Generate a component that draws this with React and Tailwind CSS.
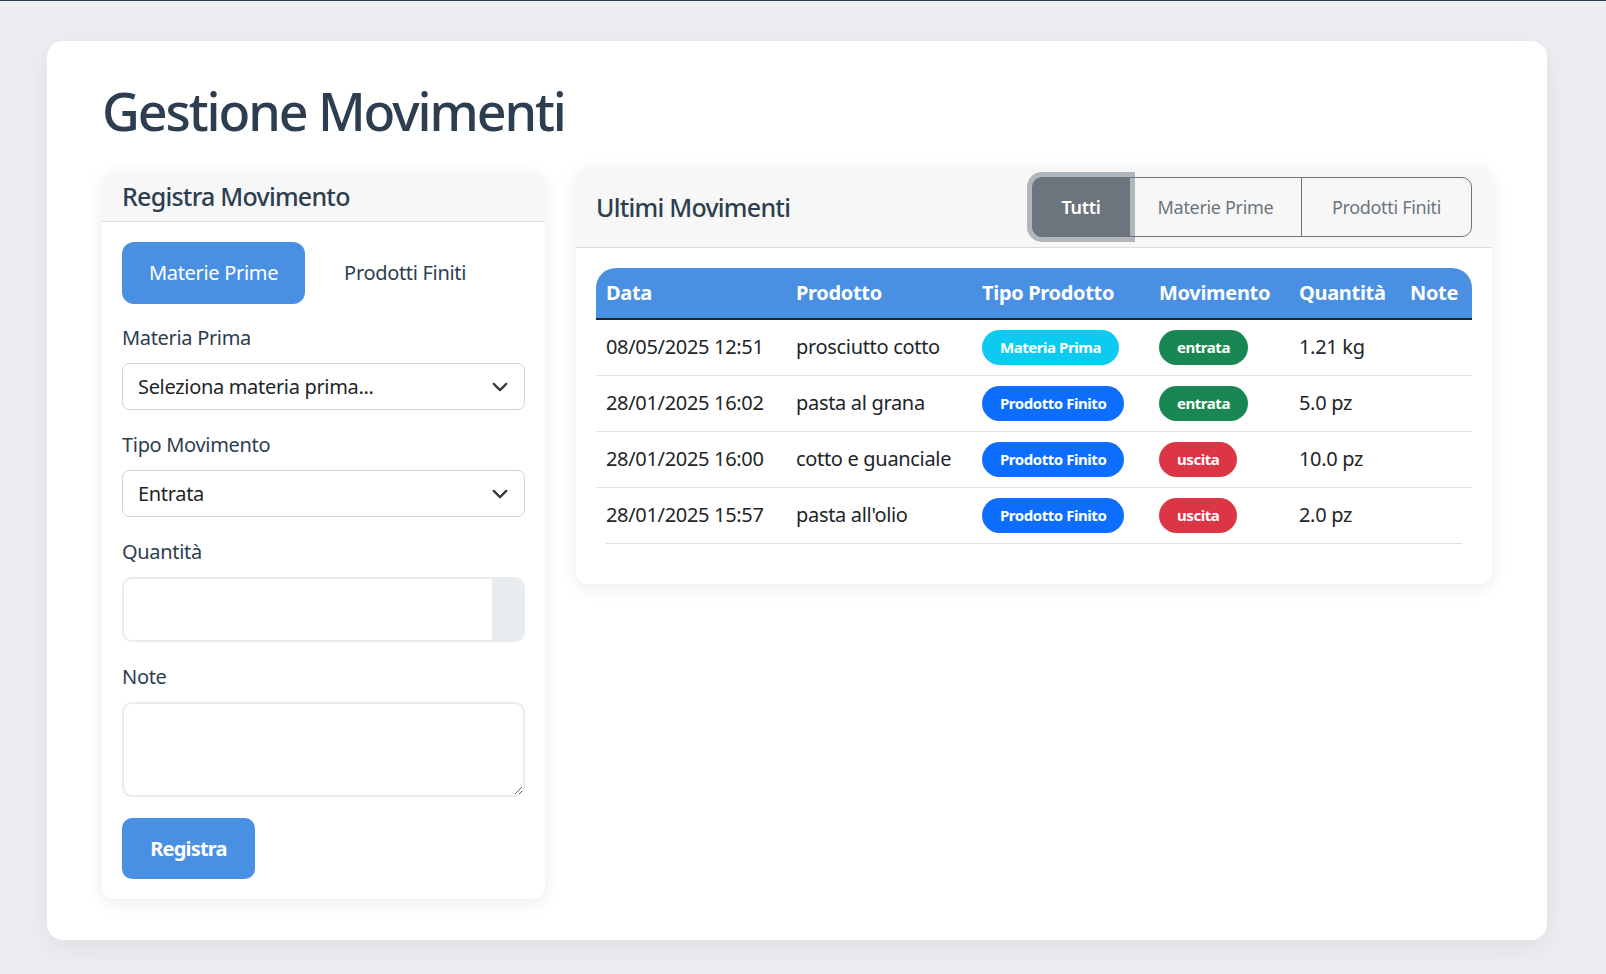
import { useState } from "react";

const movimenti = [
  { data: "08/05/2025 12:51", prodotto: "prosciutto cotto", tipo: "materia", movimento: "entrata", quantita: "1.21 kg" },
  { data: "28/01/2025 16:02", prodotto: "pasta al grana", tipo: "prodotto", movimento: "entrata", quantita: "5.0 pz" },
  { data: "28/01/2025 16:00", prodotto: "cotto e guanciale", tipo: "prodotto", movimento: "uscita", quantita: "10.0 pz" },
  { data: "28/01/2025 15:57", prodotto: "pasta all'olio", tipo: "prodotto", movimento: "uscita", quantita: "2.0 pz" },
];

function Chevron() {
  return (
    <svg width="20" height="15" viewBox="0 0 16 12" className="pointer-events-none absolute right-[15px] top-1/2 -translate-y-1/2">
      <path d="M3 3.5l5 5 5-5" fill="none" stroke="#343a40" strokeWidth="1.8" strokeLinecap="round" strokeLinejoin="round" />
    </svg>
  );
}

function Badge({ className, children }) {
  return (
    <span className={`inline-block rounded-full px-[18px] py-[10px] text-[15px] font-bold leading-[15px] tracking-[-0.03em] text-white ${className}`}>
      {children}
    </span>
  );
}

export default function App() {
  const [tipo, setTipo] = useState("materie");
  const [filtro, setFiltro] = useState("tutti");

  const righe = movimenti.filter((m) => {
    if (filtro === "materie") return m.tipo === "materia";
    if (filtro === "prodotti") return m.tipo === "prodotto";
    return true;
  });

  return (
    <div className="min-h-screen bg-[#eceef1] font-['Noto_Sans',sans-serif] tracking-[-0.02em] text-[#2c3e50]">
      <div className="h-px bg-[#2c3e50]" />
      <div className="pl-[47px] pt-[40px] pb-[33px]">
        <div className="w-[1500px] rounded-[16px] bg-white px-[55px] pt-[39px] pb-[41px] shadow-[0_8px_30px_rgba(0,0,0,0.07)]">
          <h1 className="mb-[25px] text-[52px] font-medium leading-[62px] tracking-[-0.04em] text-[#2c3e50]">Gestione Movimenti</h1>

          <div className="flex items-start gap-[31px]">
            {/* form registrazione */}
            <div className="mt-[4px] w-[443px] shrink-0 overflow-hidden rounded-[12px] bg-white shadow-[0_4px_18px_rgba(0,0,0,0.08)]">
              <div className="border-b border-[#dcdcdc] bg-[#f7f7f7] px-[20px] py-[10px]">
                <h5 className="text-[25px] font-medium leading-[30px] tracking-[-0.03em]">Registra Movimento</h5>
              </div>
              <div className="p-[20px]">
                <div className="mb-[19px] flex gap-[12px]">
                  <button
                    onClick={() => setTipo("materie")}
                    className={`h-[62px] rounded-[12px] px-[27px] text-[20px] leading-[30px] ${tipo === "materie" ? "bg-[#4a90e2] text-white" : "text-[#2c3e50]"}`}
                  >
                    Materie Prime
                  </button>
                  <button
                    onClick={() => setTipo("prodotti")}
                    className={`h-[62px] rounded-[12px] px-[27px] text-[20px] leading-[30px] ${tipo === "prodotti" ? "bg-[#4a90e2] text-white" : "text-[#2c3e50]"}`}
                  >
                    Prodotti Finiti
                  </button>
                </div>

                <div className="mb-[20px]">
                  <label className="mb-[10px] block text-[20px] leading-[30px]">
                    {tipo === "materie" ? "Materia Prima" : "Prodotto Finito"}
                  </label>
                  <div className="relative">
                    <select className="h-[47px] w-full appearance-none rounded-[7px] border border-[#ced4da] bg-white pl-[15px] pr-[45px] text-[20px] text-[#212529] outline-none">
                      <option>{tipo === "materie" ? "Seleziona materia prima..." : "Seleziona prodotto finito..."}</option>
                    </select>
                    <Chevron />
                  </div>
                </div>

                <div className="mb-[20px]">
                  <label className="mb-[10px] block text-[20px] leading-[30px]">Tipo Movimento</label>
                  <div className="relative">
                    <select className="h-[47px] w-full appearance-none rounded-[7px] border border-[#ced4da] bg-white pl-[15px] pr-[45px] text-[20px] text-[#212529] outline-none">
                      <option>Entrata</option>
                      <option>Uscita</option>
                    </select>
                    <Chevron />
                  </div>
                </div>

                <div className="mb-[20px]">
                  <label className="mb-[10px] block text-[20px] leading-[30px]">Quantità</label>
                  <div className="flex h-[65px] overflow-hidden rounded-[10px] border-2 border-[#e9ecef]">
                    <input type="text" className="min-w-0 flex-1 px-[15px] text-[20px] outline-none" />
                    <div className="w-[31px] bg-[#e9ecef]" />
                  </div>
                </div>

                <div className="mb-[21px]">
                  <label className="mb-[10px] block text-[20px] leading-[30px]">Note</label>
                  <textarea className="block h-[95px] w-full rounded-[10px] border-2 border-[#e9ecef] px-[15px] py-[10px] text-[20px] outline-none" />
                </div>

                <button className="h-[61px] w-[133px] rounded-[10px] bg-[#4a90e2] text-[20px] font-bold tracking-[-0.04em] text-white">Registra</button>
              </div>
            </div>

            {/* ultimi movimenti */}
            <div className="min-w-0 flex-1 overflow-hidden rounded-[12px] bg-white shadow-[0_4px_18px_rgba(0,0,0,0.08)]">
              <div className="flex items-center justify-between border-b border-[#dcdcdc] bg-[#f7f7f7] px-[20px] py-[10px]">
                <h5 className="text-[25px] font-medium leading-[30px] tracking-[-0.03em]">Ultimi Movimenti</h5>
                <div className="flex text-[18px] leading-[27px]">
                  <button
                    onClick={() => setFiltro("tutti")}
                    className={`relative z-10 h-[60px] w-[98px] rounded-l-[10px] border border-[#6c757d] ${filtro === "tutti" ? "bg-[#6c757d] font-semibold text-white shadow-[0_0_0_5px_rgba(108,117,125,0.5)]" : "text-[#6c757d]"}`}
                  >
                    Tutti
                  </button>
                  <button
                    onClick={() => setFiltro("materie")}
                    className={`-ml-px h-[60px] w-[173px] border border-[#6c757d] ${filtro === "materie" ? "relative z-10 bg-[#6c757d] font-semibold text-white shadow-[0_0_0_5px_rgba(108,117,125,0.5)]" : "text-[#6c757d]"}`}
                  >
                    Materie Prime
                  </button>
                  <button
                    onClick={() => setFiltro("prodotti")}
                    className={`-ml-px h-[60px] w-[171px] rounded-r-[10px] border border-[#6c757d] ${filtro === "prodotti" ? "relative z-10 bg-[#6c757d] font-semibold text-white shadow-[0_0_0_5px_rgba(108,117,125,0.5)]" : "text-[#6c757d]"}`}
                  >
                    Prodotti Finiti
                  </button>
                </div>
              </div>

              <div className="px-[20px] pt-[20px] pb-[40px]">
                <table className="w-full table-fixed border-collapse text-left text-[20px] leading-[30px] text-[#212529]">
                  <thead>
                    <tr className="border-b-2 border-[#212529] bg-[#4a90e2] text-white">
                      <th className="w-[190px] rounded-tl-[20px] px-[10px] py-[10px] font-bold">Data</th>
                      <th className="w-[186px] px-[10px] py-[10px] font-bold">Prodotto</th>
                      <th className="w-[177px] px-[10px] py-[10px] font-bold">Tipo Prodotto</th>
                      <th className="w-[140px] px-[10px] py-[10px] font-bold">Movimento</th>
                      <th className="w-[111px] px-[10px] py-[10px] font-bold">Quantità</th>
                      <th className="rounded-tr-[20px] px-[10px] py-[10px] font-bold">Note</th>
                    </tr>
                  </thead>
                  <tbody>
                    {righe.map((m, i) => (
                      <tr key={m.data} className={i < righe.length - 1 ? "border-b border-[#dee2e6]" : ""}>
                        <td className="h-[56px] px-[10px] align-middle">{m.data}</td>
                        <td className="px-[10px] align-middle">{m.prodotto}</td>
                        <td className="px-[10px] align-middle">
                          {m.tipo === "materia" ? (
                            <Badge className="bg-[#0dcaf0]">Materia Prima</Badge>
                          ) : (
                            <Badge className="bg-[#0d6efd]">Prodotto Finito</Badge>
                          )}
                        </td>
                        <td className="px-[10px] align-middle">
                          {m.movimento === "entrata" ? (
                            <Badge className="bg-[#198754]">entrata</Badge>
                          ) : (
                            <Badge className="bg-[#dc3545]">uscita</Badge>
                          )}
                        </td>
                        <td className="px-[10px] align-middle">{m.quantita}</td>
                        <td className="px-[10px] align-middle"></td>
                      </tr>
                    ))}
                  </tbody>
                </table>
                <div className="mx-[10px] h-px bg-[#dee2e6]" />
              </div>
            </div>
          </div>
        </div>
      </div>
    </div>
  );
}
